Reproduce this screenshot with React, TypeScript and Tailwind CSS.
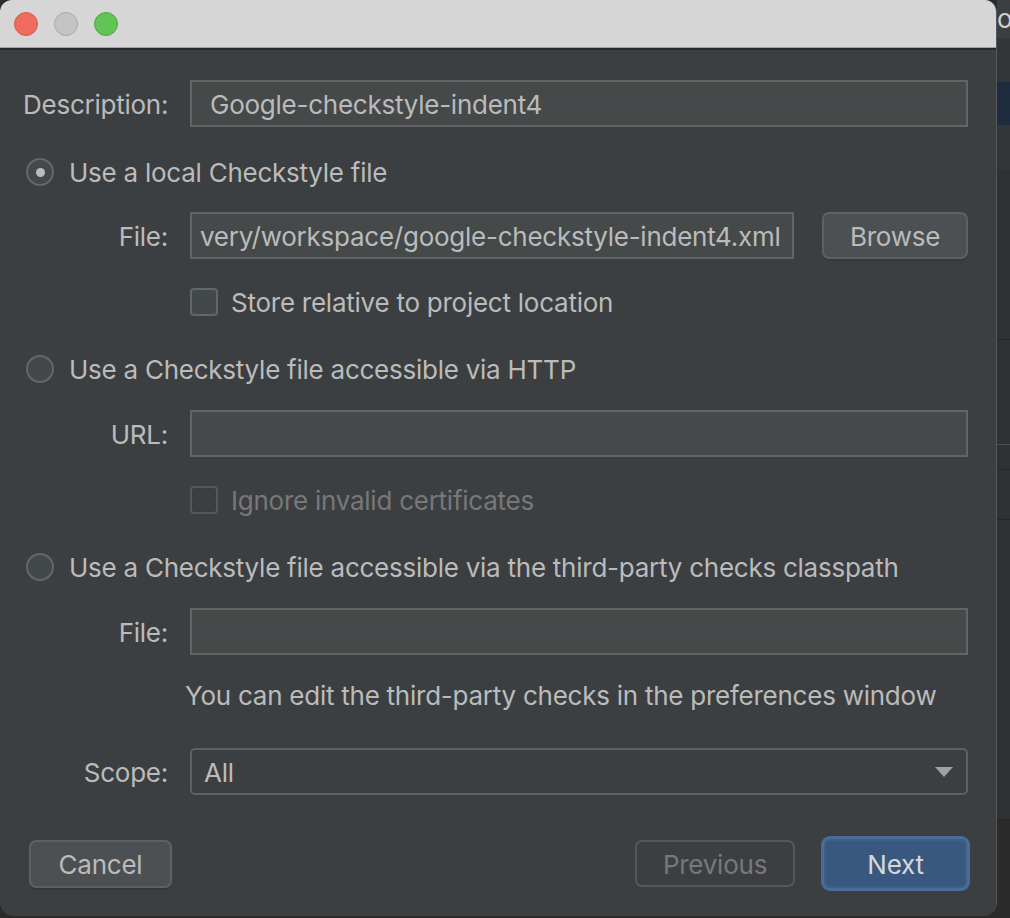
import React from 'react';

const font = { fontFamily: 'Inter, "Liberation Sans", sans-serif' };

const Radio = ({ checked, label }: { checked?: boolean; label: string }) => (
  <div className="flex items-center h-[28px] ml-[3px] gap-[15px]">
    <div className="w-[28px] h-[28px] rounded-full border-2 border-[#646769] bg-[#43494a] flex items-center justify-center">
      {checked && <div className="w-[9px] h-[9px] rounded-full bg-[#bbbbbb]" />}
    </div>
    <span className="text-[26px] leading-none pt-[2px] tracking-[-0.25px] text-[#bbbbbb]">{label}</span>
  </div>
);

const Checkbox = ({ label, disabled }: { label: string; disabled?: boolean }) => (
  <div className="flex items-center h-[28px] ml-[167px] gap-[13px]">
    <div
      className={
        disabled
          ? 'w-[28px] h-[28px] rounded-[4px] border-2 border-[#545658]'
          : 'w-[28px] h-[28px] rounded-[4px] border-2 border-[#646769] bg-[#43494a]'
      }
    />
    <span
      className={
        disabled
          ? 'text-[26px] leading-none pt-[2px] tracking-[-0.25px] text-[#787878]'
          : 'text-[26px] leading-none pt-[2px] tracking-[-0.25px] text-[#bbbbbb]'
      }
    >
      {label}
    </span>
  </div>
);

const Label = ({ children }: { children: React.ReactNode }) => (
  <span className="w-[145px] shrink-0 text-right text-[26px] leading-none pt-[2px] tracking-[-0.25px] text-[#bbbbbb]">
    {children}
  </span>
);

const Field = ({ label, value }: { label: string; value?: string }) => (
  <div className="flex items-center h-[47px]">
    <Label>{label}</Label>
    <div className="flex-1 ml-[22px] h-full border-2 border-[#646464] bg-[#45494a] flex items-center px-[18px] overflow-hidden">
      <span className="text-[26px] leading-none pt-[2px] tracking-[-0.25px] text-[#bbbbbb] whitespace-nowrap">{value}</span>
    </div>
  </div>
);

export default function App() {
  return (
    <div className="w-[1010px] h-[918px] bg-[#2b2b2b] flex overflow-hidden" style={font}>
      <div className="w-[997px] shrink-0 h-[916px] flex flex-col rounded-t-[12px] rounded-b-[14px] overflow-hidden border-r border-[#555759]">
        {/* title bar */}
        <div className="h-[48px] bg-[#d6d6d6] flex items-center gap-[16px] pl-[14px] border-b border-[#a3a3a3]">
          <div className="w-[24px] h-[24px] rounded-full bg-[#ee6b60] border border-[#d55a4f]" />
          <div className="w-[24px] h-[24px] rounded-full bg-[#c4c4c4] border border-[#a8a8a8]" />
          <div className="w-[24px] h-[24px] rounded-full bg-[#61c454] border border-[#4ea843]" />
        </div>
        <div className="h-[2px] bg-[#2a2a2a]" />

        {/* body */}
        <div className="flex-1 bg-[#3c3f41] flex flex-col pl-[23px] pr-[28px] pt-[30px]">
          <Field label="Description:" value="Google-checkstyle-indent4" />

          <div className="mt-[31px]">
            <Radio checked label="Use a local Checkstyle file" />
          </div>
          <div className="mt-[26px] flex items-center h-[47px]">
            <Label>File:</Label>
            <div className="flex items-center ml-[22px] h-full w-[604px] border-2 border-[#646464] bg-[#45494a] px-[8px] overflow-hidden">
              <span className="text-[26px] leading-none pt-[2px] tracking-[-0.25px] text-[#bbbbbb] whitespace-nowrap">
                very/workspace/google-checkstyle-indent4.xml
              </span>
            </div>
            <button className="ml-[28px] w-[146px] h-full rounded-[7px] border-2 border-[#5e6163] bg-[#4c5052] shadow-[0_2px_0_#35383a] text-[26px] leading-none pt-[2px] tracking-[-0.25px] text-[#bbbbbb]">
              Browse
            </button>
          </div>
          <div className="mt-[29px]">
            <Checkbox label="Store relative to project location" />
          </div>

          <div className="mt-[39px]">
            <Radio label="Use a Checkstyle file accessible via HTTP" />
          </div>
          <div className="mt-[27px]">
            <Field label="URL:" value="" />
          </div>
          <div className="mt-[29px]">
            <Checkbox disabled label="Ignore invalid certificates" />
          </div>

          <div className="mt-[39px]">
            <Radio label="Use a Checkstyle file accessible via the third-party checks classpath" />
          </div>
          <div className="mt-[27px]">
            <Field label="File:" value="" />
          </div>
          <div className="mt-[27px] ml-[162px] h-[26px] flex items-center">
            <span className="text-[26px] leading-none pt-[2px] tracking-[-0.25px] text-[#bbbbbb] whitespace-nowrap">
              You can edit the third-party checks in the preferences window
            </span>
          </div>

          <div className="mt-[40px] flex items-center h-[47px]">
            <Label>Scope:</Label>
            <div className="flex-1 ml-[22px] h-full rounded-[5px] border-2 border-[#5e6163] bg-[#3c3f41] flex items-center justify-between pl-[12px] pr-[12px]">
              <span className="text-[26px] leading-none pt-[2px] tracking-[-0.25px] text-[#bbbbbb]">All</span>
              <svg width="20" height="12" viewBox="0 0 20 12">
                <path d="M1 1 H19 L10 11 Z" fill="#a0a0a0" />
              </svg>
            </div>
          </div>

          <div className="mt-[41px] flex items-center">
            <button className="ml-[6px] w-[143px] h-[48px] rounded-[7px] border-2 border-[#5e6163] bg-[#4c5052] shadow-[0_2px_0_#35383a] text-[26px] leading-none pt-[2px] tracking-[-0.25px] text-[#bbbbbb]">
              Cancel
            </button>
            <div className="flex-1" />
            <button className="w-[160px] h-[47px] rounded-[7px] border-2 border-[#55585a] text-[26px] leading-none pt-[2px] tracking-[-0.25px] text-[#787878]">
              Previous
            </button>
            <div className="ml-[26px] mr-[-2px] w-[149px] h-[55px] rounded-[9px] bg-[#4a6c97] p-[3px]">
              <button className="w-full h-full rounded-[6px] border-2 border-[#3d5f8a] bg-[#3a587f] text-[26px] leading-none pt-[2px] tracking-[-0.25px] text-[#d4d8dc]">
                Next
              </button>
            </div>
          </div>
        </div>
      </div>

      {/* IDE behind the dialog */}
      <div className="flex-1 min-w-0 flex flex-col">
        <div className="h-[38px] bg-[#3c3f41] text-[26px] leading-[38px] text-[#cfcfcf] overflow-hidden whitespace-nowrap">
          o
        </div>
        <div className="h-[44px] bg-[#333537]" />
        <div className="h-[43px] bg-[#1d2c3f]" />
        <div className="h-[45px] bg-[#333537]" />
        <div className="h-[170px] bg-[#2f3133] border-b border-[#252627]" />
        <div className="h-[105px] bg-[#2f3133] border-b border-[#4a4c4e]" />
        <div className="h-[25px] bg-[#2f3133] border-b border-[#252627]" />
        <div className="h-[50px] bg-[#2f3133] border-b border-[#252627]" />
        <div className="h-[300px] bg-[#2f3133] border-b border-[#252627]" />
        <div className="flex-1 bg-[#2b2b2b]" />
      </div>
    </div>
  );
}
